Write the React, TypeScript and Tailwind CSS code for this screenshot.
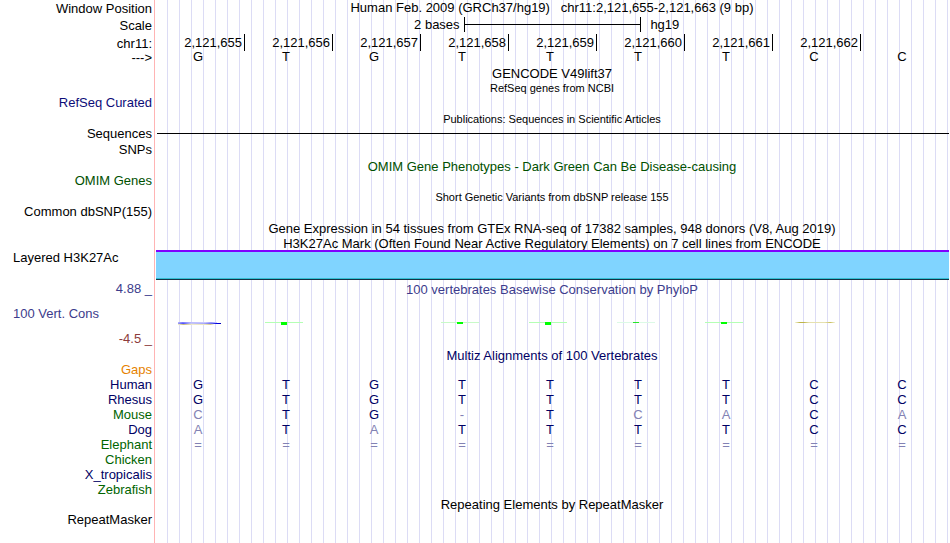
import type { ReactNode } from 'react';

const positions = [
  '2,121,655',
  '2,121,656',
  '2,121,657',
  '2,121,658',
  '2,121,659',
  '2,121,660',
  '2,121,661',
  '2,121,662',
];

const sequence = 'GTGTTTTCC';

const NAVY = 'text-[#000064]';
const GREEN = 'text-[#006400]';

const species = [
  { name: 'Gaps', color: 'text-[#e68200]', bases: '' },
  { name: 'Human', color: NAVY, bases: 'GTGTTTTCC' },
  { name: 'Rhesus', color: NAVY, bases: 'GTGTTTTCC' },
  { name: 'Mouse', color: GREEN, bases: 'CTG-TCACA' },
  { name: 'Dog', color: NAVY, bases: 'ATATTTTCC' },
  { name: 'Elephant', color: GREEN, bases: '=========' },
  { name: 'Chicken', color: GREEN, bases: '' },
  { name: 'X_tropicalis', color: NAVY, bases: '' },
  { name: 'Zebrafish', color: GREEN, bases: '' },
];

// depth is the height of the green box under the zero line
type Score = { kind: 'green'; depth: number; line: string } | { kind: 'blue' } | { kind: 'yellow' } | null;

const scores: Score[] = [
  { kind: 'blue' },
  { kind: 'green', depth: 3, line: '#b4ffb4' },
  null,
  { kind: 'green', depth: 2, line: '#c8fac8' },
  { kind: 'green', depth: 3, line: '#b4ffb4' },
  { kind: 'green', depth: 1, line: '#dcfae6' },
  { kind: 'green', depth: 2, line: '#b4ffb4' },
  { kind: 'yellow' },
  null,
];

interface RowProps {
  height: string;
  label?: string;
  labelClass?: string;
  children?: ReactNode;
}

function Row({ height, label, labelClass = 'justify-end', children }: RowProps) {
  return (
    <div className={`grid grid-cols-[156px_minmax(0,1fr)] ${height}`}>
      <div className={`flex items-center pr-1 pl-[13px] whitespace-pre ${labelClass}`}>{label}</div>
      <div className="min-w-0 pl-px">{children}</div>
    </div>
  );
}

function Title({ children, className = '' }: { children: ReactNode; className?: string }) {
  return (
    <div className={`flex h-full items-center justify-center pr-[2px] whitespace-pre ${className}`}>
      {children}
    </div>
  );
}

function ScoreMark({ score }: { score: Score }) {
  if (!score) return <span />;
  return (
    <svg width="88" height="8" viewBox="0 0 88 8" shapeRendering="crispEdges" aria-hidden="true">
      {score.kind === 'green' && (
        <>
          <rect x="20" y="2" width="38" height="1" fill={score.line} />
          <rect x="36" y="2" width="6" height={score.depth} fill={score.depth === 1 ? '#28e628' : '#00ff00'} />
        </>
      )}
      {score.kind === 'blue' && (
        <>
          <defs>
            <linearGradient id="blue-top" gradientUnits="userSpaceOnUse" x1="21" x2="60" y1="0" y2="0">
              <stop offset="0" stopColor="#b4b4ff" />
              <stop offset="0.12" stopColor="#7878ff" />
              <stop offset="0.35" stopColor="#bebeff" />
              <stop offset="0.7" stopColor="#c8c8ff" />
              <stop offset="0.85" stopColor="#9696ff" />
              <stop offset="1" stopColor="#d2d2ff" />
            </linearGradient>
            <linearGradient id="blue-mid" gradientUnits="userSpaceOnUse" x1="21" x2="64" y1="0" y2="0">
              <stop offset="0" stopColor="#a0a0e6" />
              <stop offset="0.12" stopColor="#5050fa" />
              <stop offset="0.3" stopColor="#c8c8f0" />
              <stop offset="0.6" stopColor="#aaaafa" />
              <stop offset="0.8" stopColor="#6464e6" />
              <stop offset="0.9" stopColor="#0000e6" />
              <stop offset="1" stopColor="#0000b4" />
            </linearGradient>
            <linearGradient id="blue-low" gradientUnits="userSpaceOnUse" x1="21" x2="57" y1="0" y2="0">
              <stop offset="0" stopColor="#f0f0d2" />
              <stop offset="0.15" stopColor="#c8be82" />
              <stop offset="0.4" stopColor="#f0ebcd" />
              <stop offset="0.75" stopColor="#ebe6be" />
              <stop offset="0.9" stopColor="#d7cd96" />
              <stop offset="1" stopColor="#fafaf0" />
            </linearGradient>
          </defs>
          <rect x="21" y="2" width="39" height="1" fill="url(#blue-top)" />
          <rect x="21" y="3" width="43" height="1" fill="url(#blue-mid)" />
          <rect x="21" y="4" width="36" height="1" fill="url(#blue-low)" />
        </>
      )}
      {score.kind === 'yellow' && (
        <>
          <defs>
            <linearGradient id="yellow-line" gradientUnits="userSpaceOnUse" x1="22" x2="62" y1="0" y2="0">
              <stop offset="0" stopColor="#f5f5dc" />
              <stop offset="0.12" stopColor="#beb446" />
              <stop offset="0.22" stopColor="#beb446" />
              <stop offset="0.35" stopColor="#e6e1af" />
              <stop offset="0.75" stopColor="#e6e1af" />
              <stop offset="0.88" stopColor="#c8be5a" />
              <stop offset="1" stopColor="#f5f5dc" />
            </linearGradient>
          </defs>
          <rect x="22" y="2" width="40" height="1" fill="url(#yellow-line)" />
        </>
      )}
    </svg>
  );
}

function BaseCell({ base, index }: { base: string; index: number }) {
  const matches = base === sequence[index];
  return (
    <td className={`p-0 pr-[6px] text-center ${matches ? 'text-[#000064]' : 'text-[#8282b4]'}`}>
      {base}
    </td>
  );
}

export default function App() {
  return (
    <main className="min-h-screen bg-white bg-[linear-gradient(to_right,white_154px,#ffb4b4_154px,#ffb4b4_155px,white_155px,white_156px,transparent_156px),repeating-linear-gradient(to_right,transparent_0px,transparent_11px,#dcdcf5_11px,#dcdcf5_12px)] pr-px font-['Liberation_Sans',Arial,sans-serif] text-[13px] leading-[15px] text-black">
      <Row height="h-[17px]" label="Window Position">
        <Title className="pb-[2px]">
          {'Human Feb. 2009 (GRCh37/hg19)   chr11:2,121,655-2,121,663 (9 bp)'}
        </Title>
      </Row>
      <Row height="h-[17px]" label="Scale">
        <div className="grid h-[15px] grid-cols-[minmax(0,1fr)_calc(200%/9+2px)_minmax(0,1fr)] pr-px">
          <span className="pr-1 text-right">2 bases</span>
          <span className="flex items-center border-x border-black">
            <span className="h-px w-full bg-black" />
          </span>
          <span className="pl-[9px]">hg19</span>
        </div>
      </Row>
      <Row height="h-[15px]" label="chr11:" labelClass="justify-end pt-[2px]">
        <div className="grid h-full grid-cols-9">
          {positions.map((position) => (
            <span key={position} className="border-r border-black pt-px pr-[2px] text-right">
              {position}
            </span>
          ))}
        </div>
      </Row>
      <Row height="h-[17px]" label="--->">
        <div className="grid grid-cols-9 text-center">
          {sequence.split('').map((base, i) => (
            <span key={i} className="pr-[6px]">
              {base}
            </span>
          ))}
        </div>
      </Row>

      <Row height="h-[15px]">
        <Title>GENCODE V49lift37</Title>
      </Row>
      <Row height="h-[14px]">
        <Title className="text-[11px]">RefSeq genes from NCBI</Title>
      </Row>
      <Row height="h-[15px]" label="RefSeq Curated" labelClass="justify-end text-[#0c0c78]" />
      <Row height="h-[16px]">
        <Title className="pt-[2px] text-[11px]">Publications: Sequences in Scientific Articles</Title>
      </Row>
      <Row height="h-[15px]" label="Sequences">
        <div className="flex h-full items-center">
          <span className="h-px w-full bg-black" />
        </div>
      </Row>
      <Row height="h-[16px]" label="SNPs" />
      <Row height="h-[16px]">
        <Title className="pt-[2px] text-[#005000]">
          OMIM Gene Phenotypes - Dark Green Can Be Disease-causing
        </Title>
      </Row>
      <Row height="h-[15px]" label="OMIM Genes" labelClass="justify-end text-[#005000]" />
      <Row height="h-[16px]">
        <Title className="pt-[2px] text-[11px]">Short Genetic Variants from dbSNP release 155</Title>
      </Row>
      <Row height="h-[15px]" label="Common dbSNP(155)" />
      <Row height="h-[17px]">
        <Title className="pt-[2px]">
          Gene Expression in 54 tissues from GTEx RNA-seq of 17382 samples, 948 donors (V8, Aug 2019)
        </Title>
      </Row>
      <Row height="h-[14px]">
        <Title>H3K27Ac Mark (Often Found Near Active Regulatory Elements) on 7 cell lines from ENCODE</Title>
      </Row>
      <Row height="h-[30px]" label="Layered H3K27Ac" labelClass="pb-[15px]">
        <div className="-ml-px h-full border-t-2 border-b border-t-[#8000ff] border-b-[#143246] bg-[#80d4ff]">
          <div className="h-full border-b border-[#32bed2]" />
        </div>
      </Row>

      <Row height="h-[18px]" label="4.88 _" labelClass="justify-end pb-[2px] text-[#3c3c8c]">
        <Title className="text-[#3c3c8c]">100 vertebrates Basewise Conservation by PhyloP</Title>
      </Row>
      <Row height="h-[33px]" label="100 Vert. Cons" labelClass="pb-[2px] text-[#3c3c8c]">
        <div className="grid grid-cols-9 pt-[22px]">
          {scores.map((score, i) => (
            <ScoreMark key={i} score={score} />
          ))}
        </div>
      </Row>
      <Row height="h-[15px]" label="-4.5 _" labelClass="justify-end text-[#8c3c3c]" />

      <Row height="h-[16px]">
        <Title className="pt-[2px] text-[#000064]">Multiz Alignments of 100 Vertebrates</Title>
      </Row>
      <table className="w-full table-fixed border-collapse">
        <colgroup>
          <col className="w-[157px]" />
          <col span={9} />
        </colgroup>
        <tbody>
          {species.map(({ name, color, bases }) => (
            <tr key={name} className="h-[15px]">
              <th scope="row" className={`p-0 pr-[5px] text-right font-normal ${color}`}>
                {name}
              </th>
              {sequence.split('').map((_, i) => (
                <BaseCell key={i} base={bases[i] ?? ''} index={i} />
              ))}
            </tr>
          ))}
        </tbody>
      </table>
      <Row height="h-[15px]">
        <Title>Repeating Elements by RepeatMasker</Title>
      </Row>
      <Row height="h-[15px]" label="RepeatMasker" />
    </main>
  );
}
